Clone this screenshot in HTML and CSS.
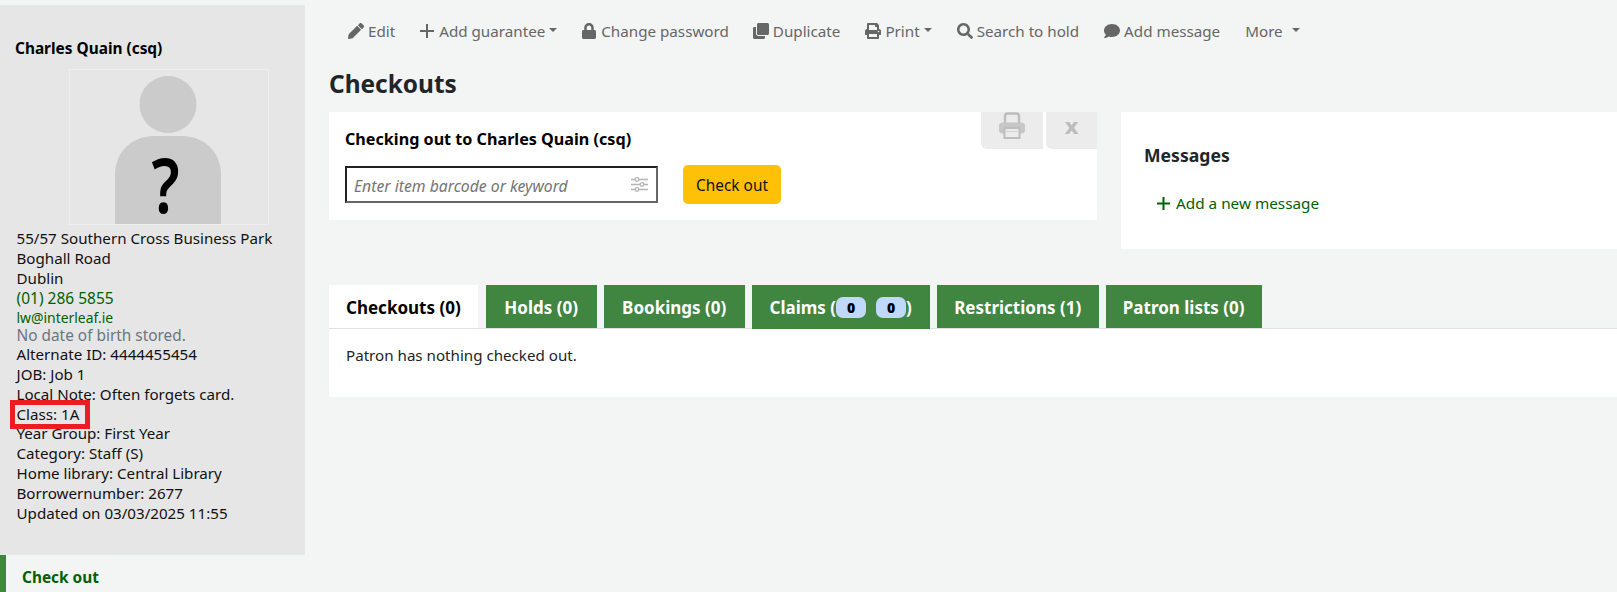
FILE: index.html
```html
<!DOCTYPE html>
<html lang="en">
<head>
<meta charset="utf-8">
<title>Checkouts</title>
<link rel="stylesheet" href="styles.css">
</head>
<body>
<div class="page">
  <aside class="side">
    <div class="patron">
      <h5 class="patron-name">Charles Quain (csq)</h5>
      <div class="photo">
        <svg width="198" height="154" viewBox="0 0 198 154" class="photo-svg">
          <circle cx="98" cy="34.500" r="28.500" fill="#cbcbcb"/>
          <path d="M45 154V105C45 81 63 66 84 66H112C133 66 151 81 151 105V154Z" fill="#cbcbcb"/>
          <text transform="translate(95.500 143) scale(.8 1)" text-anchor="middle" class="photo-q">?</text>
        </svg>
      </div>
      <ul class="info">
        <li>55/57 Southern Cross Business Park</li>
        <li>Boghall Road</li>
        <li>Dublin</li>
        <li class="link">(01) 286 5855</li>
        <li class="link small">lw@interleaf.ie</li>
        <li class="muted">No date of birth stored.</li>
        <li>Alternate ID: 4444455454</li>
        <li>JOB: Job 1</li>
        <li>Local Note: Often forgets card.</li>
        <li><span class="mark">Class: 1A</span></li>
        <li>Year Group: First Year</li>
        <li>Category: Staff (S)</li>
        <li>Home library: Central Library</li>
        <li>Borrowernumber: 2677</li>
        <li>Updated on 03/03/2025 11:55</li>
      </ul>
    </div>
    <nav class="sidenav"><a class="sidenav-item">Check out</a></nav>
  </aside>
  <main class="main">
    <div class="toolbar">
      <a class="tool"><svg class="ic" viewBox="0 0 512 512"><path d="M497.900 142.100l-46.100 46.100c-4.700 4.700-12.300 4.700-17 0l-111-111c-4.700-4.700-4.700-12.300 0-17l46.100-46.100c18.700-18.700 49.100-18.700 67.900 0l60.100 60.100c18.800 18.700 18.800 49.100 0 67.900zM284.200 99.800L21.600 362.400.4 483.900c-2.900 16.400 11.400 30.600 27.800 27.800l121.500-21.300 262.600-262.600c4.700-4.700 4.700-12.300 0-17l-111-111c-4.800-4.700-12.400-4.700-17.100 0z"/></svg>Edit</a>
      <a class="tool tool-tight"><svg class="ic ic-add" viewBox="0 0 14 14"><path d="M6 0h2v6h6v2H8v6H6V8H0V6h6z"/></svg>Add guarantee<i class="caret"></i></a>
      <a class="tool tool-tight"><svg class="ic" viewBox="0 0 448 512"><path d="M400 224h-24v-72C376 68.200 307.800 0 224 0S72 68.200 72 152v72H48c-26.500 0-48 21.500-48 48v192c0 26.500 21.500 48 48 48h352c26.500 0 48-21.500 48-48V272c0-26.500-21.500-48-48-48zm-104 0H152v-72c0-39.700 32.300-72 72-72s72 32.300 72 72v72z"/></svg>Change password</a>
      <a class="tool"><svg class="ic" viewBox="0 0 512 512"><path d="M464 0c26.510 0 48 21.490 48 48v288c0 26.510-21.490 48-48 48H176c-26.510 0-48-21.490-48-48V48c0-26.510 21.490-48 48-48h288M176 416c-44.112 0-80-35.888-80-80V128H48c-26.510 0-48 21.490-48 48v288c0 26.510 21.490 48 48 48h288c26.510 0 48-21.490 48-48v-48H176z"/></svg>Duplicate</a>
      <a class="tool"><svg class="ic" viewBox="0 0 512 512"><path d="M448 192V77.250c0-8.490-3.370-16.620-9.370-22.630L393.370 9.370c-6-6-14.140-9.370-22.630-9.370H96C78.330 0 64 14.330 64 32v160c-35.350 0-64 28.650-64 64v112c0 8.840 7.160 16 16 16h48v96c0 17.670 14.330 32 32 32h320c17.670 0 32-14.330 32-32v-96h48c8.840 0 16-7.160 16-16V256c0-35.350-28.650-64-64-64zm-64 256H128v-96h256v96zm0-224H128V64h192v48c0 8.840 7.160 16 16 16h48v96zm48 72c-13.250 0-24-10.750-24-24 0-13.260 10.750-24 24-24s24 10.740 24 24c0 13.250-10.750 24-24 24z"/></svg>Print<i class="caret"></i></a>
      <a class="tool"><svg class="ic" viewBox="0 0 512 512"><path d="M505 442.700L405.300 343c-4.500-4.500-10.600-7-17-7H372c27.600-35.300 44-79.700 44-128C416 93.100 322.900 0 208 0S0 93.100 0 208s93.100 208 208 208c48.300 0 92.700-16.400 128-44v16.300c0 6.400 2.500 12.500 7 17l99.700 99.700c9.400 9.400 24.600 9.400 33.900 0l28.300-28.300c9.400-9.400 9.400-24.600.1-34zM208 336c-70.700 0-128-57.200-128-128 0-70.700 57.200-128 128-128 70.700 0 128 57.200 128 128 0 70.700-57.200 128-128 128z"/></svg>Search to hold</a>
      <a class="tool"><svg class="ic" viewBox="0 0 512 512"><path d="M256 32C114.600 32 0 125.100 0 240c0 49.600 21.400 95 57 130.700C44.500 421.100 2.700 466 2.200 466.500c-2.200 2.300-2.800 5.700-1.500 8.700S4.800 480 8 480c66.300 0 116-31.800 140.600-51.400 32.700 12.300 69 19.400 107.400 19.400 141.400 0 256-93.100 256-208S397.400 32 256 32z"/></svg>Add message</a>
      <a class="tool">More<i class="caret caret-wide"></i></a>
    </div>
    <h1 class="title">Checkouts</h1>
    <div class="panels">
      <section class="panel checkout">
        <div class="corner-tabs">
          <span class="corner-tab corner-print">
            <svg width="28" height="28" viewBox="0 0 28 28" fill="none"><path d="M7 12V4.500C7 2.800 8 1.500 9.800 1.500h8.400C20 1.500 21 2.800 21 4.500V12" stroke="#bdbdbd" stroke-width="2.400"/><rect x="1" y="10.500" width="26" height="11" rx="3.500" fill="#c6c6c6"/><rect x="6.500" y="16" width="15" height="10" fill="#ececec" stroke="#bdbdbd" stroke-width="2"/><path d="M7.500 19.500h13" stroke="#d4d4d4"/></svg>
          </span>
          <span class="corner-tab corner-x">x</span>
        </div>
        <h4 class="checkout-title">Checking out to Charles Quain (csq)</h4>
        <div class="checkout-row">
          <div class="barcode">
            <span class="barcode-ph">Enter item barcode or keyword</span>
            <svg width="17" height="15" viewBox="0 0 17 15" fill="none" stroke="#b5b5b5" stroke-width="1.300"><path d="M0 2.500h17M0 7.500h17M0 12.500h17"/><circle cx="6" cy="2.500" r="1.800" fill="#fff"/><circle cx="11" cy="7.500" r="1.800" fill="#fff"/><circle cx="6" cy="12.500" r="1.800" fill="#fff"/></svg>
          </div>
          <button class="btn-check" type="button">Check out</button>
        </div>
      </section>
      <section class="panel messages">
        <h4 class="messages-title">Messages</h4>
        <a class="add-msg"><svg class="ic-plus" width="13" height="13" viewBox="0 0 13 13"><path d="M5.500 0h2v5.500H13v2H7.500V13h-2V7.500H0v-2h5.500z"/></svg>Add a new message</a>
      </section>
    </div>
    <div class="tabs">
      <a class="tab active">Checkouts (0)</a>
      <a class="tab tab-holds">Holds (0)</a>
      <a class="tab tab-bookings">Bookings (0)</a>
      <a class="tab tab-claims">Claims (<b class="pill">0</b><b class="pill">0</b>)</a>
      <a class="tab tab-restrictions">Restrictions (1)</a>
      <a class="tab tab-lists">Patron lists (0)</a>
    </div>
    <div class="tab-body">Patron has nothing checked out.</div>
  </main>
</div>
</body>
</html>
```
FILE: styles.css
```css
* { box-sizing: border-box; }
html, body { margin: 0; padding: 0; }
body {
  background: #f3f4f4;
  font-family: "Noto Sans", "Open Sans", sans-serif;
  font-size: 15.200px;
  color: #1a1a1a;
  height: 592px;
  overflow: hidden;
}
.page { display: flex; align-items: flex-start; padding-top: 5px; }
.side { width: 305px; flex: none; }
.patron { background: #e6e6e6; height: 550px; padding: 35px 0 0 0; }
.patron-name { margin: 0 0 11px 15px; font-size: 15.400px; line-height: 18px; font-weight: 700; color: #000; }
.photo { width: 200px; height: 156px; margin-left: 69px; border: 1px solid #eeeeee; }
.photo-svg { display: block; overflow: visible; }
.photo-q { font-family: "Noto Sans", sans-serif; font-size: 76px; font-weight: 600; fill: #000; }
.info { list-style: none; margin: 0; padding: 4px 0 0 16.500px; font-size: 15.150px; line-height: 19.850px; color: #111; }
.link { color: #006100; line-height: 19px; font-size: 15.500px; }
.small { font-size: 13.900px; line-height: 19px; }
.muted { color: #6c757d; line-height: 18.500px; font-size: 15.400px; }
.mark { display: inline-block; line-height: 19px; padding: 0 6px 0 2px; margin-left: -2px; outline: 5px solid #ed1c24; }
.sidenav-item { display: block; border-left: 6px solid #408540; height: 37px; padding: 13px 0 0 16px; font-weight: 700; font-size: 15.400px; line-height: 20px; color: #006100; }
.main { flex: 1; min-width: 0; padding: 0 0 0 24px; }
.toolbar { display: flex; align-items: center; height: 52px; padding: 0 0 0 19px; gap: 25px; color: #666; }
.tool { display: flex; align-items: center; line-height: 20px; white-space: nowrap; }
.tool-tight { margin-right: -1px; }
.ic { width: 16px; height: 16px; fill: #666; margin-right: 4px; flex: none; }
.ic-add { width: 14px; height: 14px; margin-right: 5px; }
.caret { display: inline-block; margin-left: 4px; margin-bottom: 3px; border-top: 4.500px solid #666; border-left: 4px solid transparent; border-right: 4px solid transparent; }
.caret-wide { margin-left: 9px; }
.title { margin: 0; height: 55px; padding-top: 12px; font-size: 24.400px; line-height: 30px; font-weight: 700; color: #212529; }
.panels { display: grid; grid-template-columns: 768px 1fr; column-gap: 24px; align-items: start; height: 173px; }
.panel { background: #fff; }
.checkout { position: relative; height: 108px; padding: 17px 16px 0 16px; }
.corner-tabs { position: absolute; top: 0; right: 0; display: flex; gap: 3px; }
.corner-tab { height: 37px; background: #ececec; border-bottom-left-radius: 6px; display: flex; align-items: flex-start; justify-content: center; }
.corner-print { width: 62px; }
.corner-x { width: 51px; font-family: "DejaVu Sans", sans-serif; font-weight: 700; font-size: 22px; line-height: 30px; color: #bdbdbd; }
.checkout-title { margin: 0 0 16px 0; font-size: 16.150px; line-height: 20px; font-weight: 700; color: #000; }
.checkout-row { display: flex; align-items: center; gap: 25px; }
.barcode { width: 313px; height: 37px; border: 2px solid; border-color: #222 #666 #666 #222; display: flex; align-items: center; justify-content: space-between; padding: 0 8px 0 7px; }
.barcode-ph { font-style: italic; color: #757575; font-size: 15.750px; padding-top: 2px; }
.btn-check { width: 98px; height: 39px; border: 0; border-radius: 5px; background: #ffc107; font: inherit; font-size: 15.400px; color: #111; padding: 2px 0 0; }
.messages { height: 137px; padding: 31px 24px 0 23px; }
.messages-title { margin: 0 0 25px 0; font-size: 17.600px; line-height: 24px; font-weight: 700; color: #212529; }
.add-msg { display: flex; align-items: center; margin-left: 13px; line-height: 22px; color: #006100; font-size: 15.300px; }
.ic-plus { fill: #006100; margin-right: 6px; }
.tabs { display: flex; align-items: flex-start; gap: 7px; height: 44px; border-bottom: 1px solid #dfe1e3; }
.tab { display: flex; align-items: center; justify-content: center; height: 43px; padding: 1px 17px 0; background: #408540; color: #fff; font-weight: 700; font-size: 17px; white-space: pre; }
.tab.active { background: #fff; color: #000; margin-right: 1px; }
.tab-holds { width: 111px; }
.tab-bookings { width: 141px; }
.tab-claims { width: 178px; height: 44px; }
.tab-restrictions { width: 162px; }
.tab-lists { width: 156px; }
.pill { display: inline-block; width: 30px; height: 21px; background: #bfd8fb; color: #000; border-radius: 7px; text-align: center; font-size: 14px; line-height: 21px; }
.pill + .pill { margin-left: 10px; }
.tab-body { background: #fff; height: 68px; padding: 15px 16px 0 17px; line-height: 22px; color: #212529; font-size: 15.150px; }
```
